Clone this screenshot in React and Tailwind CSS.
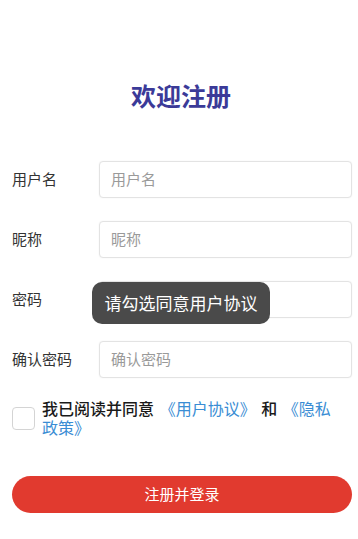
export default function App() {
  const font = { fontFamily: '"Noto Sans CJK SC", "Noto Sans", sans-serif' };
  const rows = [
    { label: "用户名", ph: "用户名" },
    { label: "昵称", ph: "昵称" },
    { label: "密码", ph: "密码", type: "password" },
    { label: "确认密码", ph: "确认密码" },
  ];
  return (
    <div
      className="relative w-[358px] h-[539px] overflow-hidden bg-white font-['Noto_Sans_CJK_SC',sans-serif]"
      style={font}
    >
      <div className="pt-[80px] text-center">
        <h1 className="text-[25px] leading-[30px] font-bold text-[#3b3a98] pl-[4px]">欢迎注册</h1>
      </div>

      <div className="mt-[51px] flex flex-col gap-[23px] pl-[12px] pr-[6px]">
        {rows.map((r) => (
          <div key={r.label} className="flex items-center">
            <div className="w-[87px] text-[15px] text-[#333333]">{r.label}</div>
            <div className="flex-1 h-[37px] rounded-[4px] border border-[#e3e3e3] bg-white shadow-[0_0_2px_rgba(0,0,0,0.05)] flex items-center px-[11px]">
              <span className="text-[15px] text-[#9a9a9a]">{r.ph}</span>
            </div>
          </div>
        ))}
      </div>

      <div className="mt-[21px] flex items-center pl-[12px] pr-[6px]">
        <div className="w-[23px] h-[23px] shrink-0 rounded-[4px] border border-[#d4d4d4] bg-white" />
        <div className="ml-[7px] w-[300px] text-[16px] leading-[19px] font-medium text-[#1a1a1a]">
          <div className="[word-spacing:2px] whitespace-nowrap">
            我已阅读并同意{" "}
            <span className="text-[#3a8dd4] font-normal">《用户协议》</span> 和{" "}
            <span className="text-[#3a8dd4] font-normal">《隐私</span>
          </div>
          <div className="text-[#3a8dd4] font-normal">政策》</div>
        </div>
      </div>

      <div className="mt-[39px] pl-[12px] pr-[6px]">
        <button className="w-full h-[37px] rounded-full bg-[#e13a2f] text-white text-[15px] flex items-center justify-center">
          注册并登录
        </button>
      </div>

      <div className="absolute left-[92px] top-[282px] w-[178px] h-[42px] rounded-[10px] bg-[#4a4a4a] flex items-center justify-center">
        <span className="text-[17px] text-white">请勾选同意用户协议</span>
      </div>
    </div>
  );
}
